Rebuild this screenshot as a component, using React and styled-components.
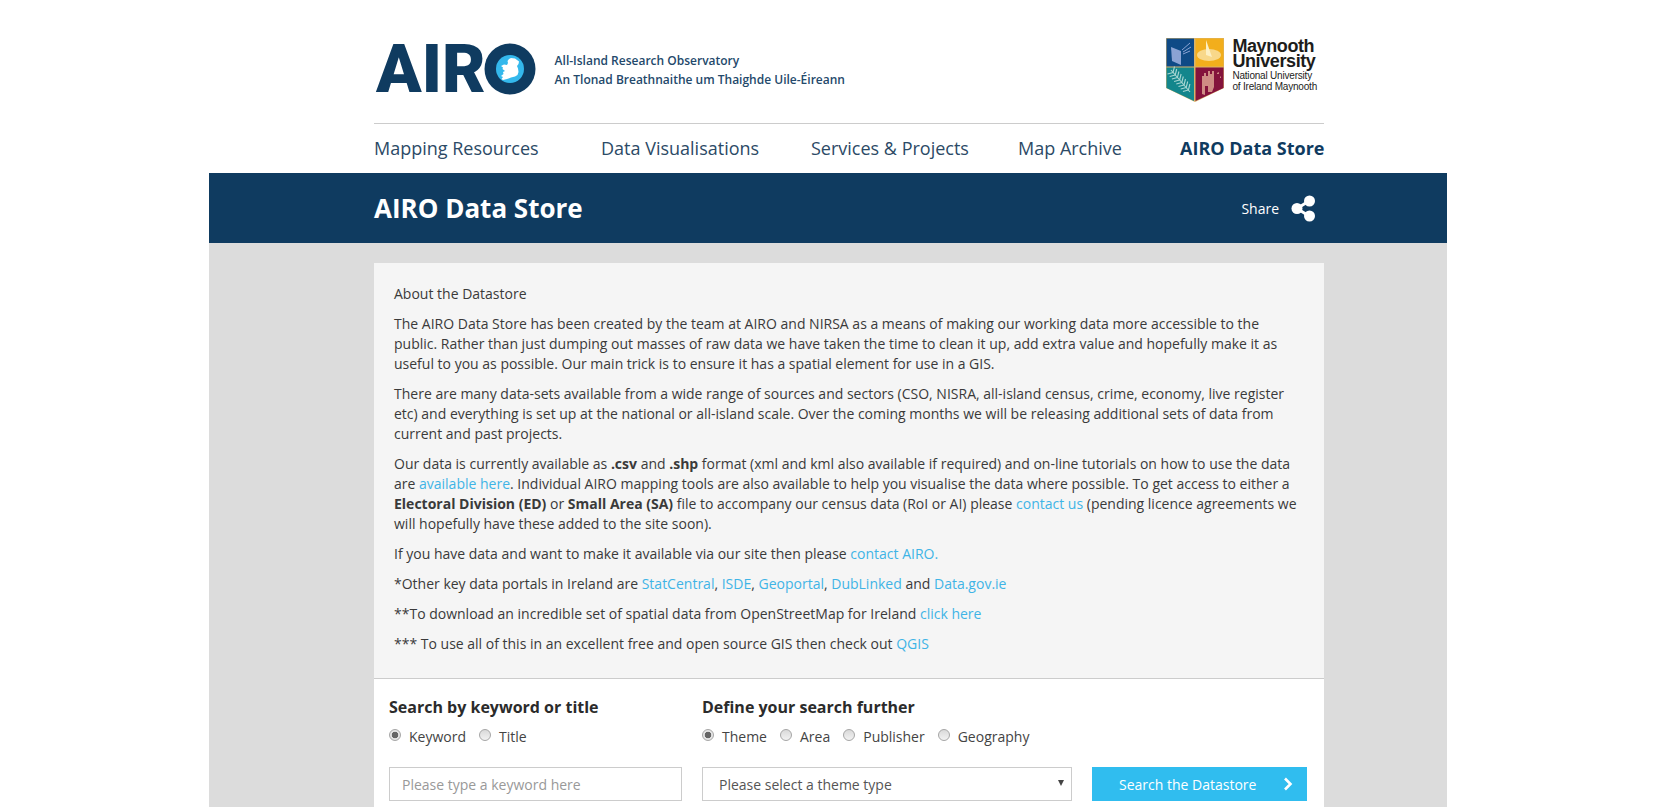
import React from 'react'
import styled, { createGlobalStyle } from 'styled-components'

const GlobalStyle = createGlobalStyle`
html, body {
    margin: 0;
    padding: 0;
    height: 100%;
    overflow: hidden;
    background: #fff;
}
body {
    font-family: "Open Sans", "Liberation Sans", sans-serif;
    font-size: 14px;
    color: #333;
}
* {
    box-sizing: border-box;
}
`

const Page = styled.div`
width: 1238px;
margin-left: 209px;
`

const Inner = styled.div`
width: 950px;
margin-left: 165px;
`

const Header = styled.header`
height: 124px;
display: flex;
align-items: flex-start;
justify-content: space-between;
border-bottom: 1px solid #ccc;
`

const Brand = styled.div`
display: flex;
align-items: center;
margin-top: 43px;
margin-left: 2px;
`

const Wordmark = styled.div`
display: flex;
align-items: center;
height: 52px;
color: #0f3b60;
`

const WordmarkText = styled.span`
font-family: Roboto, "Open Sans", sans-serif;
font-weight: 900;
font-size: 67px;
line-height: 52px;
margin-right: -2px;
`

const Strapline = styled.div`
margin-left: 19px;
padding-top: 2px;
font-size: 12px;
line-height: 19px;
font-weight: 600;
color: #24496b;
`

const Uni = styled.div`
display: flex;
margin-top: 38px;
margin-right: 7px;
`

const UniText = styled.div`
margin-left: 8px;
font-family: "Liberation Sans", Arial, sans-serif;
color: #1d1d1b;
`

const UniName = styled.div`
font-size: 18px;
line-height: 15px;
font-weight: 700;
letter-spacing: -0.4px;
margin-top: 1px;
`

const UniSub = styled.div`
font-size: 10px;
line-height: 11px;
letter-spacing: -0.2px;
margin-top: 1px;
`

const Nav = styled.nav`
display: grid;
grid-template-columns: 227px 210px 207px 162px 144px;
height: 49px;
padding-bottom: 2px;
align-items: center;
`

const NavLink = styled.a`
font-size: 18px;
white-space: nowrap;
font-weight: ${p => (p.$active ? 700 : 400)};
color: ${p => (p.$active ? '#0f3b60' : '#2c4a66')};
`

const TitleBar = styled.div`
height: 70px;
background: #0f3b60;
color: #fff;
`

const TitleRow = styled(Inner)`
height: 100%;
display: flex;
align-items: center;
justify-content: space-between;
`

const Title = styled.h1`
margin: 0;
font-size: 26px;
font-weight: 700;
`

const Share = styled.div`
display: flex;
align-items: center;
gap: 12px;
font-size: 14px;
margin-right: 8px;
`

const Main = styled.div`
background: #dcdcdc;
padding-top: 20px;
height: 564px;
`

const About = styled.section`
background: #f5f5f5;
padding: 21px 20px 14px;
border-bottom: 1px solid #ccc;
height: 416px;
`

const Para = styled.p`
margin: 0 0 10px;
font-size: 14px;
line-height: 20px;
color: #3a3a3a;
`

const Link = styled.a`
color: #3fb4e6;
`

const SearchForm = styled.form`
background: #fff;
height: 149px;
padding: 17px 17px 0 15px;
display: grid;
grid-template-columns: 313px 390px 215px;
align-items: start;
`

const Group = styled.div`
display: flex;
flex-direction: column;
`

const GroupTitle = styled.h3`
margin: 0;
font-size: 16px;
line-height: 22px;
font-weight: 700;
color: #2b2b2b;
`

const Radios = styled.div`
display: flex;
margin-top: 8px;
height: 20px;
align-items: center;
`

const RadioLabel = styled.label`
display: flex;
align-items: center;
font-size: 14px;
color: #444;
margin-right: 13px;
`

const Radio = styled.input.attrs({ type: 'radio' })`
appearance: none;
width: 12px;
height: 12px;
margin: -2px 8px 0 0;
border-radius: 50%;
border: 1px solid #a6a6a6;
background: linear-gradient(#d9d9d9, #f2f2f2);
&:checked {
    background: radial-gradient(circle, #666 0 3px, #e6e6e6 3.6px);
}
`

const Input = styled.input`
width: 293px;
height: 34px;
margin-top: 21px;
padding: 0 12px;
font: inherit;
font-size: 14px;
border: 1px solid #ccc;
background: #fff;
&::placeholder {
    color: #999;
    opacity: 1;
}
`

const SelectBox = styled.div`
position: relative;
width: 370px;
height: 34px;
margin-top: 21px;
padding-left: 16px;
display: flex;
align-items: center;
border: 1px solid #ccc;
color: #555;
font-size: 14px;
`

const SelectArrow = styled.span`
position: absolute;
right: 7px;
top: 12px;
width: 0;
height: 0;
border-left: 3px solid transparent;
border-right: 3px solid transparent;
border-top: 6px solid #444;
`

const SearchButton = styled.button`
width: 215px;
height: 34px;
margin-top: 71px;
padding: 0 14px 0 27px;
display: flex;
align-items: center;
justify-content: space-between;
border: none;
background: #30bdef;
color: #fff;
font: inherit;
font-size: 14px;
`

const Logo = () => (
    <svg width="52" height="52" viewBox="0 0 52 52" aria-hidden="true">
        <circle cx="26" cy="26" r="25.5" fill="#0f3b60" />
        <circle cx="26" cy="26" r="14" fill="#34b8ec" />
        <path
            fill="#fff"
            d="M27 15L31 15.5 33 17 35 18.5 34.5 21 33 23 34 25.5 34.5 29 33.5 32 31 33.5 27 34.5 23 36 19 37 17.5 36 19 34 17 33 19.5 31 19 29 21 28 18.5 26 19 24.5 17 23 20 21.5 23 22 24 20 23.5 18 25 16z"
        />
    </svg>
)

const fernLeaves = [0, 1, 2, 3, 4, 5, 6, 7]

const Shield = () => (
    <svg width="58" height="64" viewBox="0 0 58 64" aria-hidden="true">
        <path fill="#d9b36a" d="M0 0h58v50L29 64 0 50z" />
        <path fill="#0f4a86" d="M.5.5H28v28H.5z" />
        <path fill="#f2ae1c" d="M29.5.5H57.5v28H29.5z" />
        <path fill="#13868c" d="M.5 29.5H28v33.5L.5 50z" />
        <path fill="#84133c" d="M29.5 29.5H57.5V50L29.5 63z" />
        <path fill="#8ba3d4" d="M5 9l10 4v14L6 23z" />
        <path stroke="#8ba3d4" strokeWidth="1" d="M16 12l8-7M17 14l8-5M17 16l7-3" />
        <ellipse cx="43" cy="17" rx="12" ry="6" fill="#f8d88a" />
        <path fill="#fdf0c4" d="M40 2l6 17-6-2z" />
        <g stroke="#a8d6d2" strokeWidth="1.1" fill="none">
            <path d="M5 32l19 22" />
            {fernLeaves.map(i => {
                const x = 7 + i * 2.2
                const y = 34.5 + i * 2.5
                return <path key={i} d={`M${x} ${y}l1.5-6M${x} ${y}l-5.5 1.5`} />
            })}
        </g>
        <path fill="#cf8c84" d="M36 56V38h2v-3h2v3h2v-5h2v3h2v-3h2v16l-2 5h-4v-6h-3v9z" />
        <path fill="#cf8c84" d="M51 35l2-1v2h-2zM54 39l1-1v2h-1z" />
    </svg>
)

const ShareIcon = () => (
    <svg width="25" height="27" viewBox="0 0 25 27" aria-hidden="true">
        <path stroke="#fff" strokeWidth="3" d="M6 13.5L18 6M6 13.5L18 21" />
        <circle cx="6" cy="13.5" r="5.5" fill="#fff" />
        <circle cx="18.5" cy="6" r="5.5" fill="#fff" />
        <circle cx="18.5" cy="21" r="5.5" fill="#fff" />
    </svg>
)

const Chevron = () => (
    <svg width="10" height="14" viewBox="0 0 10 14" aria-hidden="true">
        <path d="M2 1.5L7.5 7 2 12.5" fill="none" stroke="#fff" strokeWidth="2.6" />
    </svg>
)

const App = () => {
    return (
        <>
            <GlobalStyle />
            <Page>
                <Inner>
                    <Header>
                        <Brand>
                            <Wordmark>
                                <WordmarkText>AIR</WordmarkText>
                                <Logo />
                            </Wordmark>
                            <Strapline>
                                All-Island Research Observatory
                                <br />
                                An Tlonad Breathnaithe um Thaighde Uile-Éireann
                            </Strapline>
                        </Brand>
                        <Uni>
                            <Shield />
                            <UniText>
                                <UniName>
                                    Maynooth
                                    <br />
                                    University
                                </UniName>
                                <UniSub>
                                    National University
                                    <br />
                                    of Ireland Maynooth
                                </UniSub>
                            </UniText>
                        </Uni>
                    </Header>
                    <Nav>
                        <NavLink>Mapping Resources</NavLink>
                        <NavLink>Data Visualisations</NavLink>
                        <NavLink>Services &amp; Projects</NavLink>
                        <NavLink>Map Archive</NavLink>
                        <NavLink $active>AIRO Data Store</NavLink>
                    </Nav>
                </Inner>
                <TitleBar>
                    <TitleRow>
                        <Title>AIRO Data Store</Title>
                        <Share>
                            Share
                            <ShareIcon />
                        </Share>
                    </TitleRow>
                </TitleBar>
                <Main>
                    <Inner>
                        <About>
                            <Para>About the Datastore</Para>
                            <Para>
                                The AIRO Data Store has been created by the team at AIRO and NIRSA as a means of making our working data more accessible to the public. Rather than just dumping out masses of raw data we have taken the time to clean it up, add extra value and hopefully make it as useful to you as possible. Our main trick is to ensure it has a spatial element for use in a GIS.
                            </Para>
                            <Para>
                                There are many data-sets available from a wide range of sources and sectors (CSO, NISRA, all-island census, crime, economy, live register etc) and everything is set up at the national or all-island scale. Over the coming months we will be releasing additional sets of data from current and past projects.
                            </Para>
                            <Para>
                                Our data is currently available as <b>.csv</b> and <b>.shp</b> format (xml and kml also available if required) and on-line tutorials on how to use the data are <Link>available here</Link>. Individual AIRO mapping tools are also available to help you visualise the data where possible. To get access to either a <b>Electoral Division (ED)</b> or <b>Small Area (SA)</b> file to accompany our census data (RoI or AI) please <Link>contact us</Link> (pending licence agreements we will hopefully have these added to the site soon).
                            </Para>
                            <Para>
                                If you have data and want to make it available via our site then please <Link>contact AIRO.</Link>
                            </Para>
                            <Para>
                                *Other key data portals in Ireland are <Link>StatCentral</Link>, <Link>ISDE</Link>, <Link>Geoportal</Link>, <Link>DubLinked</Link> and <Link>Data.gov.ie</Link>
                            </Para>
                            <Para>
                                **To download an incredible set of spatial data from OpenStreetMap for Ireland <Link>click here</Link>
                            </Para>
                            <Para>
                                *** To use all of this in an excellent free and open source GIS then check out <Link>QGIS</Link>
                            </Para>
                        </About>
                        <SearchForm onSubmit={ev => ev.preventDefault()}>
                            <Group>
                                <GroupTitle>Search by keyword or title</GroupTitle>
                                <Radios>
                                    <RadioLabel><Radio name="scope" defaultChecked />Keyword</RadioLabel>
                                    <RadioLabel><Radio name="scope" />Title</RadioLabel>
                                </Radios>
                                <Input placeholder="Please type a keyword here" />
                            </Group>
                            <Group>
                                <GroupTitle>Define your search further</GroupTitle>
                                <Radios>
                                    <RadioLabel><Radio name="kind" defaultChecked />Theme</RadioLabel>
                                    <RadioLabel><Radio name="kind" />Area</RadioLabel>
                                    <RadioLabel><Radio name="kind" />Publisher</RadioLabel>
                                    <RadioLabel><Radio name="kind" />Geography</RadioLabel>
                                </Radios>
                                <SelectBox>
                                    Please select a theme type
                                    <SelectArrow />
                                </SelectBox>
                            </Group>
                            <SearchButton>
                                Search the Datastore
                                <Chevron />
                            </SearchButton>
                        </SearchForm>
                    </Inner>
                </Main>
            </Page>
        </>
    )
}

export default App
